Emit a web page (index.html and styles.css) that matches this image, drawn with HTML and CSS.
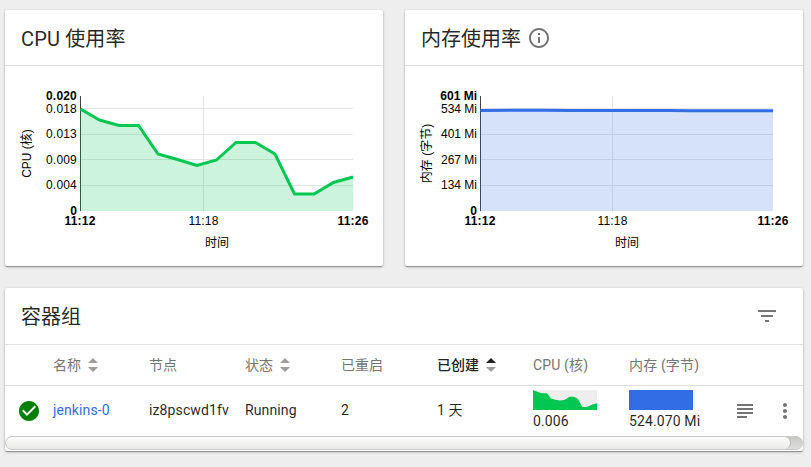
FILE: index.html
```html
<!DOCTYPE html>
<html lang="zh-CN">
<head>
<meta charset="utf-8">
<title>容器组</title>
<link rel="stylesheet" href="styles.css">
</head>
<body>
<main class="page">
  <div class="charts">
    <section class="card card-cpu">
      <header class="card-header"><h2 class="latin">CPU 使用率</h2></header>
      <svg class="chart" width="378" height="200" viewBox="5 66 378 200">
        <g class="grid"><path d="M81 108.5H353M81 134.5H353M81 159.5H353M81 185.5H353M203.5 96V211"/></g>
        <path class="axis" d="M80.5 96V211"/>
        <path class="area-cpu" d="M80 109L99.5 120L119 125.5H138.5L158 154L177.5 159.5L197 165.5L216.5 160L236 142.5H255.5L275 154L294.5 194H314L333.5 182.5L353 177V211H80Z"/>
        <path class="line-cpu" d="M80.5 109L99.5 120L119 125.5H138.5L158 154L177.5 159.5L197 165.5L216.5 160L236 142.5H255.5L275 154L294.5 194H314L333.5 182.5L353 177"/>
        <g class="y-labels decimals">
          <text class="edge" x="77" y="100">0.020</text><text x="77" y="113">0.018</text><text x="77" y="138">0.013</text><text x="77" y="164">0.009</text><text x="77" y="189">0.004</text><text class="edge" x="77" y="215">0</text>
        </g>
        <g class="x-labels">
          <text class="edge time" x="80" y="225">11:12</text><text class="time" x="203.5" y="225">11:18</text><text class="edge time" x="353" y="225">11:26</text><text x="217" y="247">时间</text>
          <text transform="translate(30.500 153.500) rotate(-90)">CPU (核)</text>
        </g>
      </svg>
    </section>
    <section class="card card-memory">
      <header class="card-header"><h2>内存使用率</h2>
        <svg class="info" width="24" height="24" viewBox="0 0 24 24"><path d="M11 17h2v-6h-2v6zm1-15C6.480 2 2 6.480 2 12s4.480 10 10 10 10-4.480 10-10S17.520 2 12 2zm0 18c-4.410 0-8-3.590-8-8s3.590-8 8-8 8 3.590 8 8-3.590 8-8 8zM11 9h2V7h-2v2z"/></svg>
      </header>
      <svg class="chart" width="398" height="200" viewBox="405 66 398 200">
        <g class="grid"><path d="M481 108.5H773M481 134.5H773M481 159.5H773M481 185.5H773M612.5 96V211"/></g>
        <path class="axis" d="M480.5 96V211"/>
        <path class="area-memory" d="M480 110.500L540 110L773 110.800V211H480Z"/>
        <path class="line-memory" d="M480.500 110.500L520 110.200H545L570 110.500H670L690 110.800H773"/>
        <g class="y-labels">
          <text class="edge" x="477" y="100">601 Mi</text><text x="477" y="113">534 Mi</text><text x="477" y="138">401 Mi</text><text x="477" y="164">267 Mi</text><text x="477" y="189">134 Mi</text><text class="edge" x="477" y="215">0</text>
        </g>
        <g class="x-labels">
          <text class="edge time" x="480" y="225">11:12</text><text class="time" x="612.5" y="225">11:18</text><text class="edge time" x="773" y="225">11:26</text><text x="627" y="247">时间</text>
          <text transform="translate(430.500 153.500) rotate(-90)">内存 (字节)</text>
        </g>
      </svg>
    </section>
  </div>
  <section class="card pods">
    <header class="card-header"><h2>容器组</h2>
      <svg class="filter" width="24" height="24" viewBox="0 0 24 24"><path d="M10 18h4v-2h-4v2zM3 6v2h18V6H3zm3 7h12v-2H6v2z"/></svg>
    </header>
    <div class="row head">
      <span></span>
      <span>名称<svg class="sort" width="10" height="14" viewBox="0 0 10 14"><path d="M0 5L5 0L10 5ZM0 9H10L5 14Z"/></svg></span>
      <span>节点</span>
      <span>状态<svg class="sort" width="10" height="14" viewBox="0 0 10 14"><path d="M0 5L5 0L10 5ZM0 9H10L5 14Z"/></svg></span>
      <span>已重启</span>
      <span class="sorted">已创建<svg class="sort" width="10" height="14" viewBox="0 0 10 14"><path class="up" d="M0 5L5 0L10 5Z"/><path d="M0 9H10L5 14Z"/></svg></span>
      <span class="latin">CPU (核)</span>
      <span class="latin">内存 (字节)</span>
      <span></span>
    </div>
    <div class="row data">
      <svg class="status" width="24" height="24" viewBox="0 0 24 24"><path d="M12 2C6.480 2 2 6.480 2 12s4.480 10 10 10 10-4.480 10-10S17.520 2 12 2zm-2 15l-5-5 1.410-1.410L10 14.170l7.590-7.590L19 8l-9 9z"/></svg>
      <a class="name">jenkins-0</a>
      <span>iz8pscwd1fv</span>
      <span>Running</span>
      <span>2</span>
      <span>1 天</span>
      <span class="metric"><svg width="64" height="20" viewBox="0 0 64 20"><path class="spark-bg" d="M0 0H64V20H0Z"/><path class="spark-cpu" d="M0 0L5 2L9 3.200H14L18 8.500Q22 10 27 10.500Q32 10.500 36 7Q40 5.500 45 9L49 16.500Q51 17.500 55 16.500L60 14.200L64 13.200V20H0Z"/></svg>0.006</span>
      <span class="metric"><svg width="64" height="20" viewBox="0 0 64 20"><path class="spark-memory" d="M0 0H64V20H0Z"/></svg>524.070 Mi</span>
      <span class="actions">
        <svg width="24" height="24" viewBox="0 0 24 24"><path d="M4 5h16v2H4zM4 9h16v2H4zM4 13h16v2H4zM4 17h10v2H4z"/></svg>
        <svg width="24" height="24" viewBox="0 0 24 24"><path d="M12 8c1.100 0 2-.9 2-2s-.9-2-2-2-2 .9-2 2 .9 2 2 2zm0 2c-1.100 0-2 .9-2 2s.9 2 2 2 2-.9 2-2-.9-2-2-2zm0 6c-1.100 0-2 .9-2 2s.9 2 2 2 2-.9 2-2-.9-2-2-2z"/></svg>
      </span>
    </div>
    <div class="scroll-track"><div class="scroll-thumb"></div></div>
  </section>
</main>
</body>
</html>
```
FILE: styles.css
```css
* { box-sizing: border-box; }
body {
  margin: 0;
  background: #eee;
  color: rgba(0, 0, 0, 0.87);
  font: 14px/20px Roboto, "Noto Sans CJK SC", sans-serif;
}
.page { height: 467px; padding: 10px 8px 0 5px; overflow: hidden; }
.charts { display: flex; gap: 22px; margin-bottom: 22px; }
.card {
  background: #fff;
  border-radius: 2px;
  box-shadow: 0 1px 3px rgba(0, 0, 0, 0.26), 0 1px 1px rgba(0, 0, 0, 0.16), 0 2px 1px -1px rgba(0, 0, 0, 0.14);
}
.card-cpu { width: 378px; }
.card-memory { width: 398px; }
.card-header {
  display: flex;
  align-items: center;
  height: 56px;
  padding: 0 16px;
  border-bottom: 1px solid #e0e0e0;
}
.card-header h2 { margin: 0; padding-top: 2px; font-size: 20px; font-weight: 400; line-height: 28px; }
.latin { letter-spacing: 0.15px; }
.info { margin-left: 6px; fill: #757575; }
.chart { display: block; }
.chart text { font: 12px "Liberation Sans", "Noto Sans CJK SC", sans-serif; fill: #000; }
.chart .edge { font-weight: 700; }
.chart .time { letter-spacing: 0.2px; }
.y-labels { text-anchor: end; }
.decimals { letter-spacing: 0.2px; }
.x-labels { text-anchor: middle; }
.grid { fill: none; stroke: #e5e5e5; }
.axis { stroke: #000; stroke-opacity: 0.75; }
.area-cpu { fill: #00c752; fill-opacity: 0.2; }
.area-memory { fill: #326de6; fill-opacity: 0.2; }
.line-cpu, .line-memory { fill: none; stroke-width: 3; }
.line-cpu { stroke: #00c752; }
.line-memory { stroke: #326de6; }
.pods { height: 163px; }
.pods .card-header { height: 57px; }
.pods .card-header h2 { padding-top: 1px; }
.filter { margin-left: auto; margin-right: 8px; fill: #757575; }
.row {
  display: grid;
  grid-template-columns: 32px repeat(7, 96px) 1fr;
  padding-left: 16px;
  align-items: center;
  white-space: nowrap;
}
.head { height: 41px; border-bottom: 1px solid #e0e0e0; color: #757575; }
.head .sorted { color: #212121; font-weight: 500; }
.sort { margin-left: 7px; vertical-align: -2px; fill: #9e9e9e; }
.sort .up { fill: #212121; }
.data { height: 50px; padding-bottom: 2px; letter-spacing: 0.12px; }
.status { margin-left: -4px; margin-top: 2px; fill: green; }
.name { color: #326de6; }
.metric { line-height: 22px; padding-top: 1px; }
.metric svg { display: block; }
.spark-bg { fill: #eee; }
.spark-cpu { fill: #00c752; }
.spark-memory { fill: #326de6; }
.actions { display: flex; gap: 16px; margin-left: 8px; margin-top: 2px; fill: #757575; }
.scroll-track {
  height: 14px;
  border: 1px solid #c9c8c6;
  border-radius: 7px;
  background: linear-gradient(#c8c8c7, #dedede);
}
.scroll-thumb {
  width: 785px;
  height: 12px;
  border-right: 1px solid #bbb;
  border-radius: 6px;
  background: linear-gradient(#fcfcfc, #e9e9e8);
}
```
